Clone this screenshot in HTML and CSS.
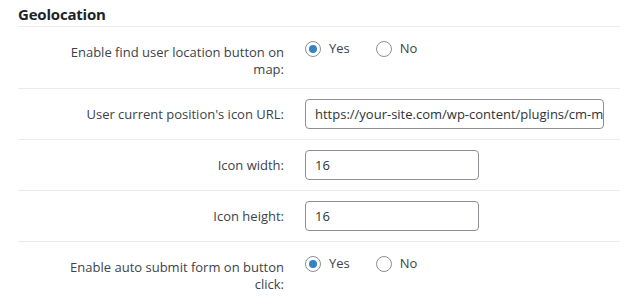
FILE: index.html
```html
<!DOCTYPE html>
<html>
<head>
<meta charset="utf-8">
<link rel="stylesheet" href="styles.css">
</head>
<body>
<section class="settings">
  <h2 class="title">Geolocation</h2>
  <div class="row row-radio">
    <div class="label">Enable find user location button on map:</div>
    <div class="field radios">
      <label class="opt"><span class="radio checked"></span>Yes</label>
      <label class="opt"><span class="radio"></span>No</label>
    </div>
  </div>
  <div class="row row-input">
    <div class="label">User current position's icon URL:</div>
    <div class="field"><div class="input wide">https://your-site.com/wp-content/plugins/cm-map-locations/assets/img/user.png</div></div>
  </div>
  <div class="row row-input">
    <div class="label">Icon width:</div>
    <div class="field"><div class="input small">16</div></div>
  </div>
  <div class="row row-input">
    <div class="label">Icon height:</div>
    <div class="field"><div class="input small">16</div></div>
  </div>
  <div class="row row-radio">
    <div class="label">Enable auto submit form on button click:</div>
    <div class="field radios">
      <label class="opt"><span class="radio checked"></span>Yes</label>
      <label class="opt"><span class="radio"></span>No</label>
    </div>
  </div>
</section>
</body>
</html>
```
FILE: styles.css
```css
* { box-sizing: border-box; }
html, body { margin: 0; padding: 0; background: #ffffff; }
body {
  font-family: "Open Sans", "Noto Sans", sans-serif;
  font-size: 13px;
  color: #2c3338;
  overflow: hidden;
}
.settings {
  margin-left: 18px;
}
.title {
  margin: 0;
  height: 26px;
  padding-top: 4px;
  font-size: 15px;
  line-height: 20px;
  font-weight: 700;
  color: #1d2327;
  letter-spacing: -0.2px;
}
.row {
  display: grid;
  grid-template-columns: 266px 1fr;
  column-gap: 21px;
  border-top: 1px solid #ebebeb;
}
.label {
  text-align: right;
  line-height: 17px;
  color: #3c434a;
  padding-left: 38px;
}
.row-input {
  align-items: center;
  padding: 10px 0;
}
.row-radio .label {
  padding-top: 17px;
  padding-bottom: 10px;
}
.row-radio .field {
  padding-top: 13px;
}
.radios {
  display: flex;
  align-items: flex-start;
  gap: 26px;
}
.opt {
  display: flex;
  align-items: center;
  gap: 8px;
  line-height: 17px;
  color: #3c434a;
}
.radio {
  width: 16px;
  height: 16px;
  border: 1px solid #8c8f94;
  border-radius: 50%;
  display: flex;
  align-items: center;
  justify-content: center;
  background: #fff;
}
.radio.checked::after {
  content: "";
  width: 8px;
  height: 8px;
  border-radius: 50%;
  background: #3582c4;
}
.input {
  height: 30px;
  border: 1px solid #8c8f94;
  border-radius: 4px;
  padding: 0 9px;
  line-height: 28px;
  white-space: nowrap;
  overflow: hidden;
  color: #2c3338;
  background: #fff;
}
.input.wide { width: 299px; }
.input.small { width: 174px; }
```
